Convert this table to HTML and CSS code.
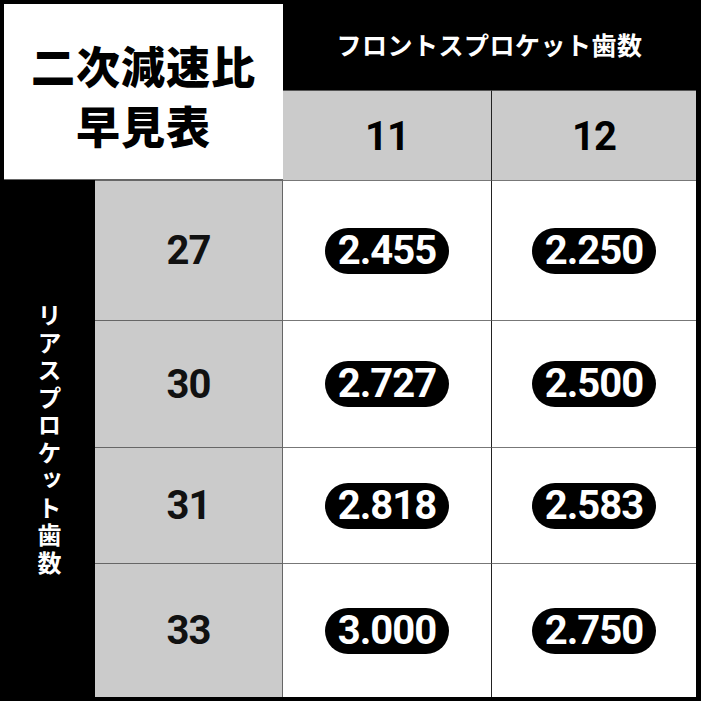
FILE: index.html
```html
<!DOCTYPE html>
<html lang="ja">
<head>
<meta charset="utf-8">
<title>二次減速比早見表</title>
<link rel="stylesheet" href="styles.css">
</head>
<body>
<div class="board">
  <div class="title"><span>二次減速比</span><span>早見表</span></div>
  <div class="front-head">フロントスプロケット歯数</div>
  <div class="col-head c3">11</div>
  <div class="col-head c4">12</div>
  <div class="rear-head">リアスプロケット歯数</div>

  <div class="row-head">27</div>
  <div class="cell"><span class="pill">2.455</span></div>
  <div class="cell right"><span class="pill">2.250</span></div>

  <div class="row-head">30</div>
  <div class="cell"><span class="pill">2.727</span></div>
  <div class="cell right"><span class="pill">2.500</span></div>

  <div class="row-head">31</div>
  <div class="cell"><span class="pill">2.818</span></div>
  <div class="cell right"><span class="pill">2.583</span></div>

  <div class="row-head">33</div>
  <div class="cell"><span class="pill">3.000</span></div>
  <div class="cell right"><span class="pill">2.750</span></div>
</div>
</body>
</html>
```

FILE: styles.css
```css
* { box-sizing: border-box; }
html, body { margin: 0; padding: 0; }
body {
  width: 701px;
  height: 701px;
  background: #000;
  overflow: hidden;
  font-family: "Noto Sans CJK JP", "Noto Sans", sans-serif;
}
.board {
  display: grid;
  grid-template-columns: 95px 188px 208px 205px;
  grid-template-rows: 90px 90px 140px 127px 116px 134px;
  width: 696px;
  height: 697px;
}
.title {
  grid-column: 1 / 3;
  grid-row: 1 / 3;
  margin: 4px 0 0 4px;
  background: #fff;
  border-bottom: 1px solid #666;
  display: flex;
  flex-direction: column;
  align-items: center;
  justify-content: center;
  padding-top: 6px;
  font-size: 44px;
  font-weight: 900;
  line-height: 60px;
  letter-spacing: 1px;
  color: #000;
}
.front-head {
  grid-column: 3 / 5;
  grid-row: 1;
  display: flex;
  align-items: center;
  justify-content: center;
  color: #fff;
  font-size: 25px;
  font-weight: 700;
  letter-spacing: 0.5px;
  padding-bottom: 2px;
}
.col-head {
  grid-row: 2;
  background: #cbcbcb;
  border-top: 1px solid #555;
  display: flex;
  align-items: center;
  justify-content: center;
  font-family: Roboto, "Liberation Sans", sans-serif;
  font-weight: 700;
  font-size: 40px;
  letter-spacing: -1px;
  color: #000;
  padding-top: 2px;
}
.col-head.c3 { grid-column: 3; }
.col-head.c4 { grid-column: 4; border-left: 1px solid #222; }
.rear-head {
  grid-column: 1;
  grid-row: 3 / 7;
  display: flex;
  align-items: center;
  justify-content: center;
  writing-mode: vertical-rl;
  color: #fff;
  font-size: 24px;
  font-weight: 700;
  letter-spacing: 3.5px;
  padding-left: 4px;
  padding-top: 4px;
}
.row-head {
  grid-column: 2;
  background: #cbcbcb;
  border-top: 1px solid #666;
  border-right: 1px solid #666;
  display: flex;
  align-items: center;
  justify-content: center;
  font-family: Roboto, "Liberation Sans", sans-serif;
  font-weight: 700;
  font-size: 40px;
  letter-spacing: -1px;
  color: #111;
}
.cell {
  background: #fff;
  border-top: 1px solid #777;
  display: flex;
  align-items: center;
  justify-content: center;
}
.cell.right { border-left: 1px solid #222; }
.pill {
  display: inline-flex;
  align-items: center;
  justify-content: center;
  width: 124px;
  height: 46px;
  border-radius: 23px;
  background: #000;
  color: #fff;
  font-family: Roboto, "Liberation Sans", sans-serif;
  font-weight: 700;
  font-size: 40px;
  letter-spacing: -1px;
  line-height: 1;
}
```
